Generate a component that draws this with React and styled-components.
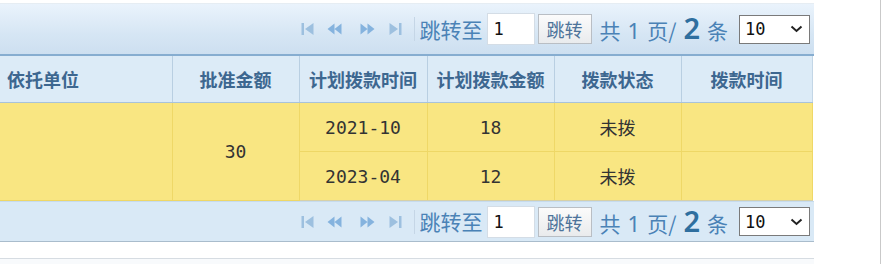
import React from 'react';
import styled, { createGlobalStyle } from 'styled-components';

const GlobalStyle = createGlobalStyle`
  html, body {
    margin: 0;
    padding: 0;
    background: #ffffff;
  }
  body {
    font-family: "Noto Sans CJK SC", "Noto Sans", sans-serif;
  }
`;

const Frame = styled.div`
  width: 880px;
  height: 264px;
  border-right: 1px solid #c9c9c9;
  overflow: hidden;
  box-sizing: content-box;
`;

const Panel = styled.div`
  width: 814px;
  padding-top: 3px;
`;

const Pager = styled.div`
  display: flex;
  align-items: center;
  justify-content: flex-end;
  padding-right: 4px;
  box-sizing: border-box;
  height: ${(p) => (p.bottom ? '41px' : '53px')};
  background: ${(p) =>
    p.bottom ? '#d9e9f6' : 'linear-gradient(#eaf3fc, #d6e6f4 60%, #cddff0)'};
  border-top: 1px solid ${(p) => (p.bottom ? '#c6dbee' : '#e6edf3')};
  border-bottom: ${(p) => (p.bottom ? '1px solid #a9bccc' : '2px solid #86add0')};
  color: #4a82b6;
`;

const NavIcons = styled.div`
  display: flex;
  align-items: center;
  padding-right: 4px;
  margin-right: 5px;
  border-right: 1px solid #c5d6e6;
  height: 24px;
`;

const NavButton = styled.span`
  display: inline-flex;
  width: ${(p) => p.w}px;
  justify-content: center;
  align-items: center;
`;

const Label = styled.span`
  font-size: 21px;
  line-height: 1;
  white-space: nowrap;
`;

const PageInput = styled.input`
  width: 48px;
  height: 32px;
  box-sizing: border-box;
  margin: 0 3px 0 4px;
  border: 1px solid #d4dde6;
  background: #fff;
  padding: 0 6px;
  font-family: "DejaVu Sans Mono", monospace;
  font-size: 17px;
  color: #111;
  outline: none;
`;

const GoButton = styled.button`
  height: 30px;
  width: 54px;
  box-sizing: border-box;
  border: 1px solid #b9bec4;
  background: linear-gradient(#fbfbfb, #e9ebed);
  font-family: "Noto Sans CJK SC", sans-serif;
  font-size: 18px;
  color: #4d739a;
  padding: 0;
  margin-right: 8px;
`;

const Total = styled.span`
  font-size: 21px;
  white-space: nowrap;
  display: inline-flex;
  align-items: baseline;
  gap: 7px;
  margin-right: 11px;
`;

const Big = styled.b`
  font-family: "Noto Sans", sans-serif;
  font-size: 29px;
  line-height: 1;
  color: #2f6f9f;
  font-weight: 600;
`;

const Num = styled.span`
  font-family: "Noto Sans", sans-serif;
  font-size: 22px;
`;

const SizeSelect = styled.div`
  width: 71px;
  height: 29px;
  box-sizing: border-box;
  border: 1px solid #7a7a7a;
  background: #fff;
  display: flex;
  align-items: center;
  justify-content: space-between;
  padding: 0 6px 0 5px;
  font-family: "DejaVu Sans Mono", monospace;
  font-size: 17px;
  color: #111;
`;

const Table = styled.table`
  width: 812px;
  border-collapse: collapse;
  table-layout: fixed;
`;

const Th = styled.th`
  height: 46px;
  background: #dcebf7;
  border-right: 1px solid #b9cfe2;
  border-bottom: 1px solid #a9c3da;
  font-size: 18px;
  font-weight: 700;
  color: #3d6790;
  text-align: ${(p) => p.align || 'center'};
  padding: 0 0 0 ${(p) => (p.align === 'left' ? '7px' : '0')};
  &:last-child {
    border-right: 1px solid #c3d6e6;
  }
`;

const Td = styled.td`
  height: 48px;
  background: #f9e682;
  border-right: 1px solid #efd867;
  border-bottom: 1px solid #eed766;
  text-align: center;
  padding: 0;
  color: #333;
  font-size: 18px;
  font-family: ${(p) =>
    p.mono ? '"DejaVu Sans Mono", monospace' : '"Noto Sans CJK SC", sans-serif'};
  tr:last-child & {
    border-bottom: 1px solid #d6d0a8;
  }
`;

const Gap = styled.div`
  height: 16px;
`;

const NextBox = styled.div`
  height: 20px;
  border-top: 1px solid #d6dce2;
  background: #f8fafc;
`;

const FirstIcon = () => (
  <svg width="13" height="14" viewBox="0 0 13 14">
    <rect x="0.5" y="1" width="2.5" height="12" fill="#9dc0df" />
    <path d="M12.5 1 L4 7 L12.5 13 Z" fill="#9dc0df" />
  </svg>
);

const PrevIcon = () => (
  <svg width="15" height="14" viewBox="0 0 15 14">
    <path d="M7.5 1.5 L0.5 7 L7.5 12.5 Z M14.5 1.5 L7.5 7 L14.5 12.5 Z" fill="#85b3de" />
  </svg>
);

const NextIcon = () => (
  <svg width="15" height="14" viewBox="0 0 15 14">
    <path d="M0.5 1.5 L7.5 7 L0.5 12.5 Z M7.5 1.5 L14.5 7 L7.5 12.5 Z" fill="#85b3de" />
  </svg>
);

const LastIcon = () => (
  <svg width="13" height="14" viewBox="0 0 13 14">
    <path d="M0.5 1 L9 7 L0.5 13 Z" fill="#9dc0df" />
    <rect x="10" y="1" width="2.5" height="12" fill="#9dc0df" />
  </svg>
);

const Chevron = () => (
  <svg width="13" height="8" viewBox="0 0 13 8">
    <path d="M1.5 1.5 L6.5 6 L11.5 1.5" stroke="#222" strokeWidth="2" fill="none" />
  </svg>
);

function PagerBar({ bottom }) {
  return (
    <Pager bottom={bottom}>
      <NavIcons>
        <NavButton w={18}><FirstIcon /></NavButton>
        <NavButton w={36}><PrevIcon /></NavButton>
        <NavButton w={29}><NextIcon /></NavButton>
        <NavButton w={28}><LastIcon /></NavButton>
      </NavIcons>
      <Label>跳转至</Label>
      <PageInput defaultValue="1" />
      <GoButton>跳转</GoButton>
      <Total>
        共<Num>1</Num>页/<Big>2</Big>条
      </Total>
      <SizeSelect>
        <span>10</span>
        <Chevron />
      </SizeSelect>
    </Pager>
  );
}

const columns = [
  { title: '依托单位', width: 172, align: 'left' },
  { title: '批准金额', width: 127 },
  { title: '计划拨款时间', width: 128 },
  { title: '计划拨款金额', width: 127 },
  { title: '拨款状态', width: 127 },
  { title: '拨款时间', width: 131 },
];

const plans = [
  { time: '2021-10', amount: '18', status: '未拨', paid: '' },
  { time: '2023-04', amount: '12', status: '未拨', paid: '' },
];

export default function App() {
  return (
    <Frame>
      <GlobalStyle />
      <Panel>
        <PagerBar />
        <Table>
          <colgroup>
            {columns.map((c) => (
              <col key={c.title} style={{ width: c.width }} />
            ))}
          </colgroup>
          <thead>
            <tr>
              {columns.map((c) => (
                <Th key={c.title} align={c.align}>{c.title}</Th>
              ))}
            </tr>
          </thead>
          <tbody>
            {plans.map((p, i) => (
              <tr key={p.time}>
                {i === 0 && <Td rowSpan={2} />}
                {i === 0 && <Td rowSpan={2} mono>30</Td>}
                <Td mono>{p.time}</Td>
                <Td mono>{p.amount}</Td>
                <Td>{p.status}</Td>
                <Td>{p.paid}</Td>
              </tr>
            ))}
          </tbody>
        </Table>
        <PagerBar bottom />
        <Gap />
        <NextBox />
      </Panel>
    </Frame>
  );
}
